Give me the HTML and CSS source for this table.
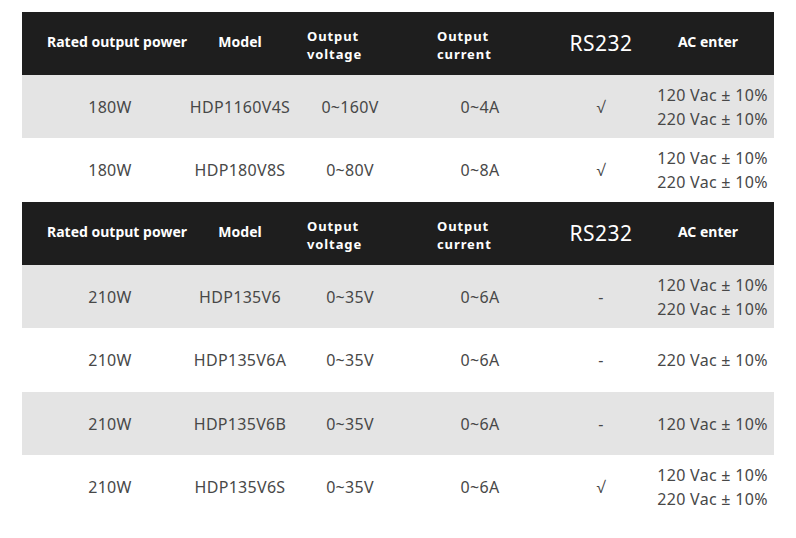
FILE: index.html
```html
<!DOCTYPE html>
<html lang="en">
<head>
<meta charset="utf-8">
<title>Specifications</title>
<link rel="stylesheet" href="styles.css">
</head>
<body>
<div class="spec">
  <div class="row head">
    <div class="cell c1">Rated output power</div>
    <div class="cell c2">Model</div>
    <div class="cell c3 two">Output<br>voltage</div>
    <div class="cell c4 two">Output<br>current</div>
    <div class="cell c5 big">RS232</div>
    <div class="cell c6">AC enter</div>
  </div>
  <div class="row grey">
    <div class="cell c1">180W</div>
    <div class="cell">HDP1160V4S</div>
    <div class="cell">0~160V</div>
    <div class="cell">0~4A</div>
    <div class="cell">√</div>
    <div class="cell">120 Vac ± 10%<br>220 Vac ± 10%</div>
  </div>
  <div class="row white tall">
    <div class="cell c1">180W</div>
    <div class="cell">HDP180V8S</div>
    <div class="cell">0~80V</div>
    <div class="cell">0~8A</div>
    <div class="cell">√</div>
    <div class="cell">120 Vac ± 10%<br>220 Vac ± 10%</div>
  </div>
  <div class="row head">
    <div class="cell c1">Rated output power</div>
    <div class="cell c2">Model</div>
    <div class="cell c3 two">Output<br>voltage</div>
    <div class="cell c4 two">Output<br>current</div>
    <div class="cell c5 big">RS232</div>
    <div class="cell c6">AC enter</div>
  </div>
  <div class="row grey">
    <div class="cell c1">210W</div>
    <div class="cell">HDP135V6</div>
    <div class="cell">0~35V</div>
    <div class="cell">0~6A</div>
    <div class="cell">-</div>
    <div class="cell">120 Vac ± 10%<br>220 Vac ± 10%</div>
  </div>
  <div class="row white tall">
    <div class="cell c1">210W</div>
    <div class="cell">HDP135V6A</div>
    <div class="cell">0~35V</div>
    <div class="cell">0~6A</div>
    <div class="cell">-</div>
    <div class="cell">220 Vac ± 10%</div>
  </div>
  <div class="row grey">
    <div class="cell c1">210W</div>
    <div class="cell">HDP135V6B</div>
    <div class="cell">0~35V</div>
    <div class="cell">0~6A</div>
    <div class="cell">-</div>
    <div class="cell">120 Vac ± 10%</div>
  </div>
  <div class="row white">
    <div class="cell c1">210W</div>
    <div class="cell">HDP135V6S</div>
    <div class="cell">0~35V</div>
    <div class="cell">0~6A</div>
    <div class="cell">√</div>
    <div class="cell">120 Vac ± 10%<br>220 Vac ± 10%</div>
  </div>
</div>
</body>
</html>
```
FILE: styles.css
```css
html, body {
  margin: 0;
  padding: 0;
  background: #ffffff;
}
body {
  padding: 12px 22px 20px 22px;
  font-family: "Noto Sans", "Open Sans", sans-serif;
  color: #484848;
}
.spec {
  width: 752px;
  display: flex;
  flex-direction: column;
}
.row {
  display: grid;
  grid-template-columns: 167px 102px 118px 142px 100px 123px;
  height: 63px;
  align-items: center;
}
.row.tall {
  height: 64px;
}
.cell {
  text-align: center;
  font-size: 16px;
  line-height: 24px;
  letter-spacing: 0.3px;
  white-space: nowrap;
}
.c1 {
  padding-left: 9px;
}
.grey {
  background: #e4e4e4;
}
.white {
  background: #ffffff;
}
.head {
  background: #1e1e1e;
  color: #ffffff;
}
.head .cell {
  font-weight: 700;
  font-size: 14px;
  line-height: 18px;
  letter-spacing: 0;
  padding-bottom: 4px;
}
.head .c1 {
  padding-left: 23px;
}
.head .two {
  text-align: left;
  font-size: 13px;
  letter-spacing: 0.9px;
  line-height: 18px;
  padding-bottom: 0;
  padding-top: 2px;
}
.head .c3 {
  padding-left: 16px;
}
.head .c4 {
  padding-left: 28px;
}
.head .big {
  font-weight: 400;
  font-size: 21px;
  line-height: 24px;
  letter-spacing: 0.5px;
  padding-bottom: 2px;
}
.head .c6 {
  padding-right: 9px;
}
```
